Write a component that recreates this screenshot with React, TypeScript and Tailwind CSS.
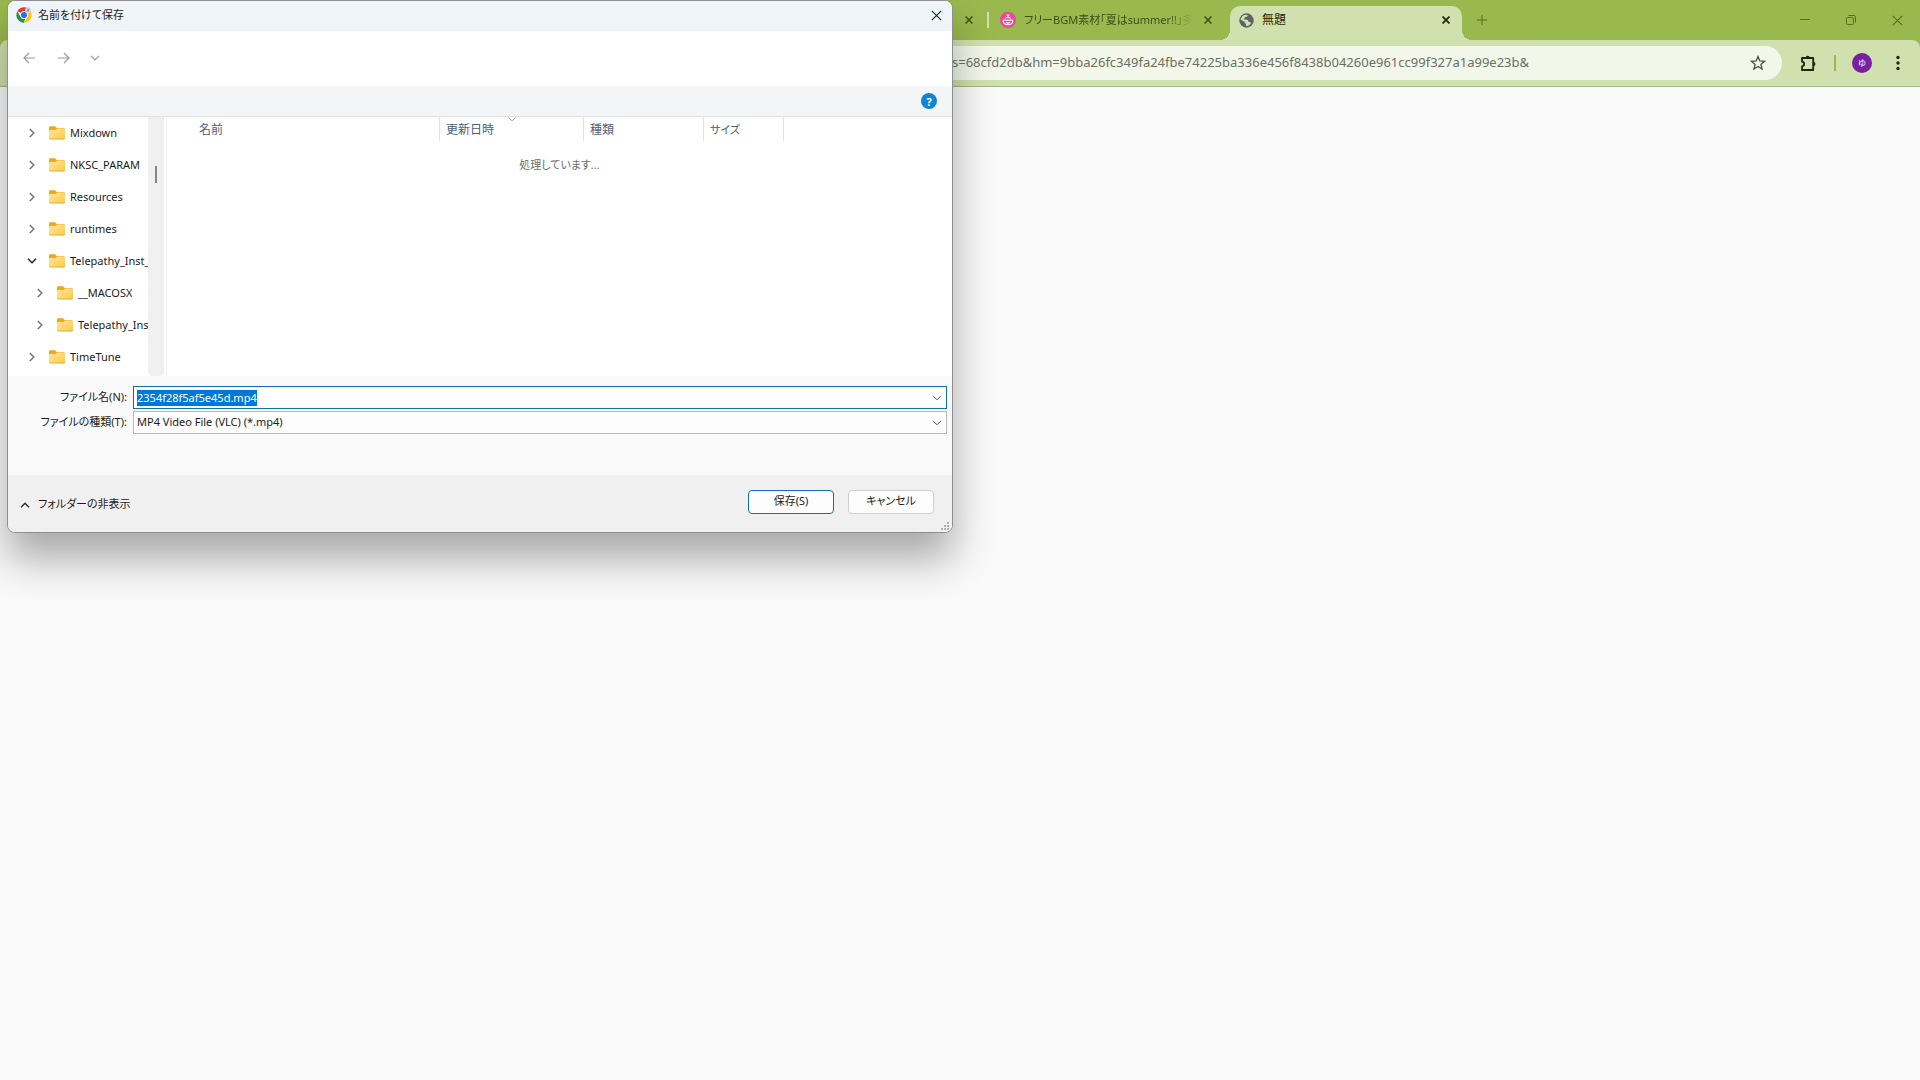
import { useEffect, useRef, type ReactNode } from "react";

const stroke = { fill: "none", stroke: "currentColor" } as const;

function Cross({ size, width }: { size: number; width: number }) {
  return (
    <svg width={size} height={size} viewBox="0 0 10 10" {...stroke} strokeWidth={width}>
      <path d="M.7.7l8.6 8.6M9.3.7L.7 9.3" />
    </svg>
  );
}

function Chevron({ className }: { className: string }) {
  return (
    <svg viewBox="0 0 10 6" className={className} {...stroke}>
      <path d="M1 .8l4 4 4-4" />
    </svg>
  );
}

function Folder() {
  return (
    <svg width="16" height="14" viewBox="0 0 16 14" className="shrink-0">
      <path d="M0 1.6C0 .8.6.3 1.3.3h4.2c.5 0 .8.1 1.1.5L8 2.2h6.6c.8 0 1.4.5 1.4 1.3V6H0z" fill="#e5ab22" />
      <path d="M0 5.2c0-.7.5-1.2 1.2-1.2h4.6c.5 0 .9-.1 1.2-.5l.8-.8h6.9c.8 0 1.3.5 1.3 1.2v8c0 .8-.5 1.3-1.3 1.3H1.3c-.8 0-1.3-.5-1.3-1.3z" fill="url(#folderFace)" />
      <path d="M.2 12.3c.2.5.6.8 1.1.8h13.4c.5 0 .9-.3 1.1-.8" stroke="#dba52b" strokeWidth=".7" fill="none" />
      <defs>
        <linearGradient id="folderFace" x1="0" y1="0" x2="1" y2="1">
          <stop offset="0" stopColor="#ffe596" />
          <stop offset="1" stopColor="#f9cb4c" />
        </linearGradient>
      </defs>
    </svg>
  );
}

function ChromeLogo() {
  return (
    <svg width="16" height="16" viewBox="0 0 48 48">
      <circle cx="24" cy="24" r="23" fill="#fff" />
      <path d="M4.1 12.5A23 23 0 0 1 43.9 12.5H24A11.5 11.5 0 0 0 14 18.3z" fill="#e33b2e" />
      <path d="M43.9 12.5A23 23 0 0 1 24 47l10-17.2A11.5 11.5 0 0 0 34 18.2L32 12.5z" fill="#fbc116" />
      <path d="M24 47A23 23 0 0 1 4.1 12.5L14 29.8A11.5 11.5 0 0 0 27.5 35z" fill="#229342" />
      <circle cx="24" cy="24" r="11.5" fill="#fff" />
      <circle cx="24" cy="24" r="9" fill="#1a73e8" />
      <circle cx="36" cy="10" r="9" fill="#d5d3dc" />
      <path d="M31 14l9-8M34 5l5 9" stroke="#7d7b8c" strokeWidth="2.5" />
    </svg>
  );
}

function PinkFavicon() {
  return (
    <svg width="16" height="16" viewBox="0 0 16 16">
      <circle cx="8" cy="8" r="8" fill="#ec4899" />
      <g fill="none" stroke="#fff" strokeWidth="1.1">
        <path d="M3.2 8.2h9.6c0 2.9-2 4.6-4.8 4.6S3.2 11.1 3.2 8.2z" />
        <path d="M5.3 6.4c.6-1.3 4.8-1.3 5.4 0M8 4.9V3M6.5 3h3M6 10.3c1 .8 3 .8 4 0" />
      </g>
    </svg>
  );
}

function Globe() {
  return (
    <svg width="15" height="15" viewBox="0 0 16 16">
      <circle cx="8" cy="8" r="7.7" fill="#5f6368" />
      <path d="M1.800 7.200C2 4.600 4 2.200 7 1.900l2 .1c.4.8.1 1.700-.8 1.900l-1.600.3c-.6.4-.3 1.300-1 1.700-.4.600.2 1.200.9 1.200l2.300.1c1 .2 1.200 1.200 1.100 2.200l1.900.1c1.100.3.9 1.300.3 2.200-1 1.300-2.400 2.200-4.400 2.200-.5-.6-.5-1.400-.2-2.100L6.800 11c-.8-.3-.9-1-.8-1.800z" fill="#d0e0ae" />
    </svg>
  );
}

type Node = { name: string; nested?: boolean; open?: boolean };

const nodes: Node[] = [
  { name: "Mixdown" },
  { name: "NKSC_PARAM" },
  { name: "Resources" },
  { name: "runtimes" },
  { name: "Telepathy_Inst_", open: true },
  { name: "__MACOSX", nested: true },
  { name: "Telepathy_Ins", nested: true },
  { name: "TimeTune" },
];

function TreeRow({ name, nested, open }: Node) {
  return (
    <li className={nested ? "flex h-8 items-center pl-[27px]" : "flex h-8 items-center pl-[19px]"}>
      <button aria-label={`${name} を展開`} className="flex w-2.5 shrink-0 justify-center">
        <Chevron
          className={open ? "w-2.5 stroke-[1.5] text-[#222]" : "w-2.5 -rotate-90 stroke-[1.5] text-[#777]"}
        />
      </button>
      <a href="#" className="ml-3 flex min-w-0 items-center gap-[5px] overflow-hidden whitespace-nowrap text-[#1b1b1b]">
        <Folder />
        {name}
      </a>
    </li>
  );
}

function HeadCell({ children, className }: { children: ReactNode; className: string }) {
  return (
    <th scope="col" className={`relative h-6 border-r border-[#e2e2e2] p-0 pt-0.5 text-left font-normal ${className}`}>
      {children}
    </th>
  );
}

function SaveDialog() {
  const nameRef = useRef<HTMLInputElement>(null);
  useEffect(() => {
    nameRef.current?.focus();
    nameRef.current?.select();
  }, []);

  return (
    <section
      role="dialog"
      aria-label="名前を付けて保存"
      className="absolute left-[7px] top-0 w-[946px] overflow-hidden rounded-lg border border-[#8f8f8f] bg-white text-[11px] text-[#1b1b1b] shadow-[0_26px_40px_0_rgba(0,0,0,0.32)]"
    >
      <header className="flex h-[30px] items-start bg-[#eff4f9] px-2 pt-1.5">
        <ChromeLogo />
        <h1 className="ml-1.5 flex-1 leading-4">名前を付けて保存</h1>
        <button aria-label="閉じる" className="flex size-4 items-center justify-center">
          <Cross size={11} width={1} />
        </button>
      </header>

      <nav className="flex h-[55px] items-center pb-0.5 pl-[15px] text-[#9a9a9a]">
        <button aria-label="戻る">
          <svg width="12" height="12" viewBox="0 0 12 12" {...stroke} strokeWidth="1.2">
            <path d="M12 6H1M6 1L1 6l5 5" />
          </svg>
        </button>
        <button aria-label="進む" className="ml-[23px]">
          <svg width="12" height="12" viewBox="0 0 12 12" {...stroke} strokeWidth="1.2">
            <path d="M0 6h11M6 1l5 5-5 5" />
          </svg>
        </button>
        <button aria-label="最近表示した場所" className="ml-5">
          <Chevron className="w-2.5 stroke-[1.2]" />
        </button>
      </nav>

      <div className="flex h-[31px] items-center justify-end border-b border-[#e0e2e4] bg-[#f4f5f7] pr-[15px]">
        <button aria-label="ヘルプ" className="flex size-4 items-center justify-center rounded-full bg-[#0f86d2] font-bold leading-none text-white">
          ?
        </button>
      </div>

      <div className="flex h-[259px]">
        <ul className="w-[140px] shrink-0 overflow-hidden">
          {nodes.map((n) => (
            <TreeRow key={n.name} {...n} />
          ))}
        </ul>
        <div className="flex w-4 shrink-0 justify-center rounded-b bg-[#f0f0f0] pt-[49px]">
          <div className="h-[17px] w-0.5 bg-[#858585]" />
        </div>
        <div className="ml-0.5 flex-1 border-l border-[#f1f1f1]">
          <table className="table-fixed border-separate border-spacing-0 text-xs text-[#4c607a]">
            <thead>
              <tr>
                <HeadCell className="w-[273px] pl-8">名前</HeadCell>
                <HeadCell className="w-36 pl-1.5">
                  更新日時
                  <Chevron className="absolute left-[68px] top-0 w-2 text-[#777]" />
                </HeadCell>
                <HeadCell className="w-[120px] pl-1.5">種類</HeadCell>
                <HeadCell className="w-20 pl-1.5 text-[11px]">サイズ</HeadCell>
              </tr>
            </thead>
          </table>
          <p className="mt-4 text-center leading-4 text-[#6d6d6d]">処理しています...</p>
        </div>
      </div>

      <form className="grid h-[99px] grid-cols-[119px_1fr] content-start gap-x-1.5 gap-y-0.5 bg-[#f9f9f9] pr-[5px] pt-2.5" onSubmit={(e) => e.preventDefault()}>
        <label htmlFor="file-name" className="self-center text-right">ファイル名(N):</label>
        <div className="flex h-[23px] items-center border border-[#0f73aa] bg-white pl-[3px] pr-1">
          <input
            id="file-name"
            ref={nameRef}
            defaultValue="2354f28f5af5e45d.mp4"
            className="h-4 min-w-0 flex-1 leading-4 outline-none selection:bg-[#0078d7] selection:text-white"
          />
          <Chevron className="w-2.5 text-[#555]" />
        </div>
        <label htmlFor="file-type" className="self-center text-right">ファイルの種類(T):</label>
        <div className="relative flex h-[23px] items-center border border-[#b9b9b9] bg-[#fdfdfd]">
          <select id="file-type" className="h-full flex-1 appearance-none pl-[3px] outline-none">
            <option>MP4 Video File (VLC) (*.mp4)</option>
          </select>
          <Chevron className="pointer-events-none absolute right-1 w-2.5 text-[#555]" />
        </div>
      </form>

      <footer className="relative flex h-[57px] items-center bg-[#f0f0f0] pl-3 pr-[18px]">
        <button className="mt-0.5 flex items-center gap-2">
          <Chevron className="w-2.5 rotate-180 stroke-[1.5] text-[#333]" />
          フォルダーの非表示
        </button>
        <button className="mb-1 ml-auto h-6 w-[86px] rounded border border-[#0f73aa] bg-[#fdfdfd]">保存(S)</button>
        <button className="mb-1 ml-3.5 h-6 w-[86px] rounded border border-[#cfcfcf] bg-[#fdfdfd]">キャンセル</button>
        <svg width="8" height="8" viewBox="0 0 8 8" className="absolute bottom-0.5 right-[3px]" fill="#b0b0b0">
          <path d="M6 0h2v2H6zM3 3h2v2H3zM6 3h2v2H6zM0 6h2v2H0zM3 6h2v2H3zM6 6h2v2H6z" />
        </svg>
      </footer>
    </section>
  );
}

export default function App() {
  return (
    <div className="relative flex min-h-screen flex-col overflow-hidden bg-[#f9f9f9] font-['Noto_Sans','Noto_Sans_CJK_JP',sans-serif] [font-feature-settings:'palt']">
      <div className="flex h-10 bg-[#99b84d] text-[11px] text-[#3d4e17]">
        <div className="flex w-[989px] shrink-0 items-center justify-end">
          <button aria-label="タブを閉じる" className="mr-3.5">
            <Cross size={8} width={1.9} />
          </button>
          <span className="h-4 w-0.5 bg-[#d0e0ae]" />
        </div>
        <div className="flex w-[241px] shrink-0 items-center pl-[11px] pr-[18px]">
          <PinkFavicon />
          <span className="ml-2 overflow-hidden whitespace-nowrap [mask-image:linear-gradient(to_right,black_85%,transparent)]">
            フリーBGM素材「夏はsummer!!」多
          </span>
          <button aria-label="タブを閉じる" className="ml-auto">
            <Cross size={8} width={1.9} />
          </button>
        </div>
        <div className="relative mt-1.5 flex w-[232px] shrink-0 items-center rounded-t-[10px] bg-[#d0e0ae] pb-1.5 pl-[9px] pr-3 text-xs text-[#1f2a0a]">
          <span className="absolute -left-2.5 bottom-0 size-2.5 bg-[radial-gradient(circle_at_top_left,transparent_10px,#d0e0ae_10px)]" />
          <span className="absolute -right-2.5 bottom-0 size-2.5 bg-[radial-gradient(circle_at_top_right,transparent_10px,#d0e0ae_10px)]" />
          <Globe />
          <span className="ml-2">無題</span>
          <button aria-label="タブを閉じる" className="ml-auto">
            <Cross size={8} width={2.2} />
          </button>
        </div>
        <button aria-label="新しいタブ" className="ml-[15px] text-[#6c8727]">
          <svg width="10" height="10" viewBox="0 0 10 10" {...stroke} strokeWidth="1.5">
            <path d="M5 0v10M0 5h10" />
          </svg>
        </button>
        <div className="ml-auto flex items-center gap-9 pr-[17px] text-[#56701a]">
          <button aria-label="最小化">
            <svg width="10" height="10" viewBox="0 0 10 10" {...stroke}>
              <path d="M0 4.5h10" />
            </svg>
          </button>
          <button aria-label="元に戻す">
            <svg width="10" height="10" viewBox="0 0 10 10" {...stroke}>
              <rect x=".5" y="2.5" width="7" height="7" rx="1" />
              <path d="M2.5.5H8A1.500 1.500 0 0 1 9.500 2v5.500" />
            </svg>
          </button>
          <button aria-label="閉じる">
            <Cross size={11} width={1} />
          </button>
        </div>
      </div>

      <div className="bg-[#99b84d]">
        <div className="flex h-[47px] items-center rounded-t-lg border-b border-[#a3b77f] bg-[#d0e0ae] pr-[18px]">
          <div className="ml-28 flex h-[34px] flex-1 items-center rounded-full bg-[#f2f7ea] pl-[840px] pr-4">
            <input
              aria-label="アドレスバー"
              readOnly
              defaultValue="s=68cfd2db&hm=9bba26fc349fa24fbe74225ba336e456f8438b04260e961cc99f327a1a99e23b&"
              className="min-w-0 flex-1 text-[13px] text-[#6b7063] outline-none"
            />
            <button aria-label="ブックマーク" className="text-[#4c5243]">
              <svg width="16" height="16" viewBox="0 0 16 16" {...stroke} strokeWidth="1.3">
                <path d="M8 1.500l1.800 4.500 4.800.3-3.700 3.100 1.200 4.700L8 11.500l-4.100 2.600 1.200-4.700L1.400 6.300l4.800-.3z" />
              </svg>
            </button>
          </div>
          <button aria-label="拡張機能" className="ml-[18px] text-[#1d2411]">
            <svg width="17" height="17" viewBox="0 0 17 17" {...stroke} strokeWidth="1.8">
              <path d="M2 3h11.200v12H2v-3.700c2.900-.4 2.900-4.200 0-4.600z" strokeLinejoin="round" />
              <path d="M5.700 2.700a2 2 0 0 1 4 0zM13.500 7a2 2 0 0 1 0 4z" fill="currentColor" stroke="none" />
            </svg>
          </button>
          <span className="ml-[17px] h-4 w-0.5 bg-[#99b84d]" />
          <button className="ml-4 flex size-5 items-center justify-center rounded-full bg-[#7b1fa2] text-[8px] text-white">ゆ</button>
          <button aria-label="メニュー" className="ml-[22px] text-[#1d2411]">
            <svg width="8" height="16" viewBox="0 0 8 16" fill="currentColor">
              <circle cx="4" cy="2.5" r="1.7" />
              <circle cx="4" cy="8" r="1.7" />
              <circle cx="4" cy="13.5" r="1.7" />
            </svg>
          </button>
        </div>
      </div>

      <main className="flex-1" />
      <SaveDialog />
    </div>
  );
}
